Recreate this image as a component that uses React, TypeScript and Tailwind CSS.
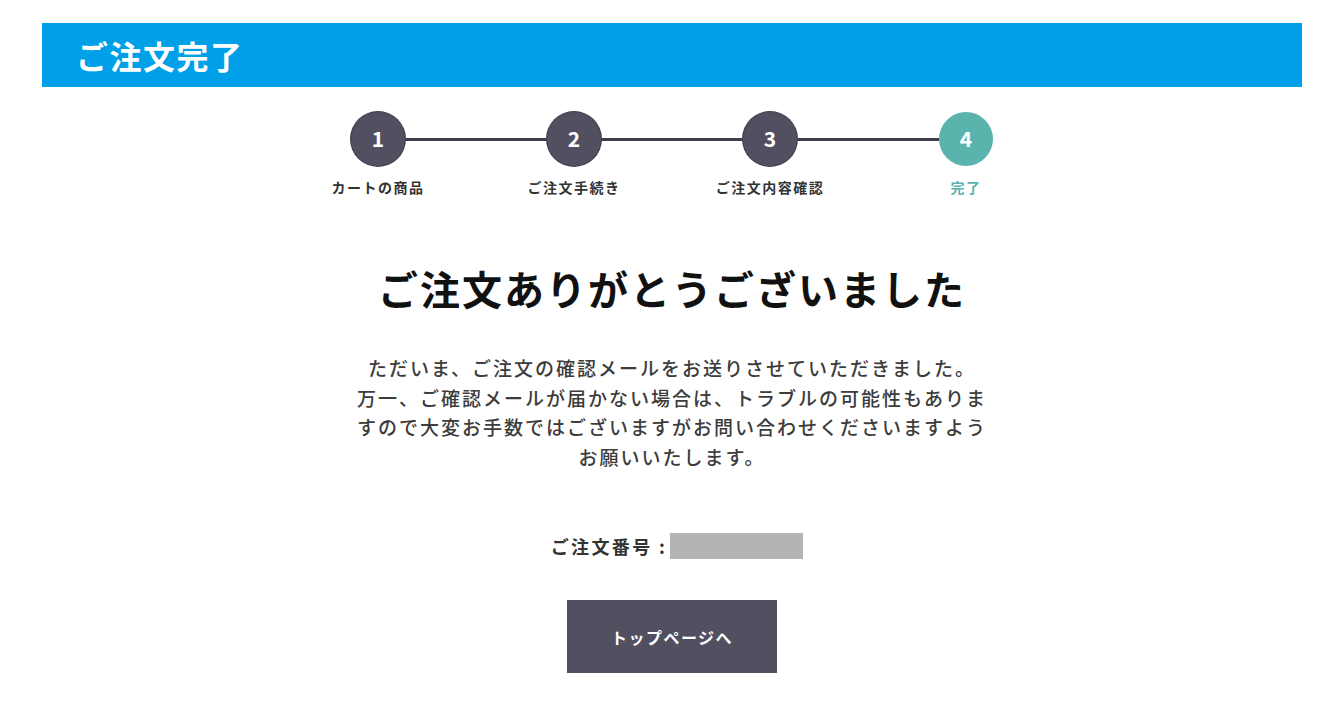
import React from "react";

const steps = [
  { n: "1", label: "カートの商品", active: false },
  { n: "2", label: "ご注文手続き", active: false },
  { n: "3", label: "ご注文内容確認", active: false },
  { n: "4", label: "完了", active: true },
];

export default function App() {
  return (
    <div className="min-h-[722px] w-full bg-white pl-[42px] pr-[38px] pt-[23px] font-['Noto_Sans_CJK_JP','Noto_Sans',sans-serif]">
      <div className="flex h-[64px] items-center bg-[#00a0e9] pl-[34px]">
        <h1 className="text-[32px] font-bold leading-none tracking-[1.5px] text-white">ご注文完了</h1>
      </div>

      <div className="mt-[25px] flex justify-center">
        {steps.map((s, i) => (
          <React.Fragment key={s.n}>
            {i > 0 && <div className="mt-[26px] h-[3px] w-[142px] bg-[#3f3d4e]" />}
            <div className="flex w-[54px] flex-col items-center">
              <div
                className={
                  "flex h-[54px] w-[54px] items-center justify-center rounded-full text-[21px] font-bold text-white " +
                  (s.active ? "bg-[#5ab3ad]" : "bg-[#514f60] ring-1 ring-[#3f3d4e]")
                }
              >
                {s.n}
              </div>
              <div
                className={
                  "mt-[11px] whitespace-nowrap text-[14px] font-bold leading-[20px] tracking-[1.5px] " +
                  (s.active ? "text-[#5ab3ad]" : "text-[#333333]")
                }
              >
                {s.label}
              </div>
            </div>
          </React.Fragment>
        ))}
      </div>

      <h2 className="mt-[63px] text-center text-[40px] font-bold leading-[56px] tracking-[2px] text-[#111111]">
        ご注文ありがとうございました
      </h2>

      <p className="mt-[37px] text-center text-[19px] font-medium leading-[29.5px] tracking-[2px] text-[#3c3c3c]">
        ただいま、ご注文の確認メールをお送りさせていただきました。
        <br />
        万一、ご確認メールが届かない場合は、トラブルの可能性もありま
        <br />
        すので大変お手数ではございますがお問い合わせくださいますよう
        <br />
        お願いいたします。
      </p>

      <div className="mt-[62px] flex items-center justify-center">
        <span className="ml-[10px] text-[18px] font-bold leading-[26px] tracking-[2.4px] text-[#333333]">ご注文番号 :</span>
        <span className="ml-[3px] h-[26px] w-[133px] bg-[#b4b4b4]" />
      </div>

      <div className="mt-[41px] flex justify-center">
        <button className="h-[73px] w-[210px] bg-[#514f60] text-[16px] font-bold tracking-[1.5px] text-white">
          トップページへ
        </button>
      </div>
    </div>
  );
}
